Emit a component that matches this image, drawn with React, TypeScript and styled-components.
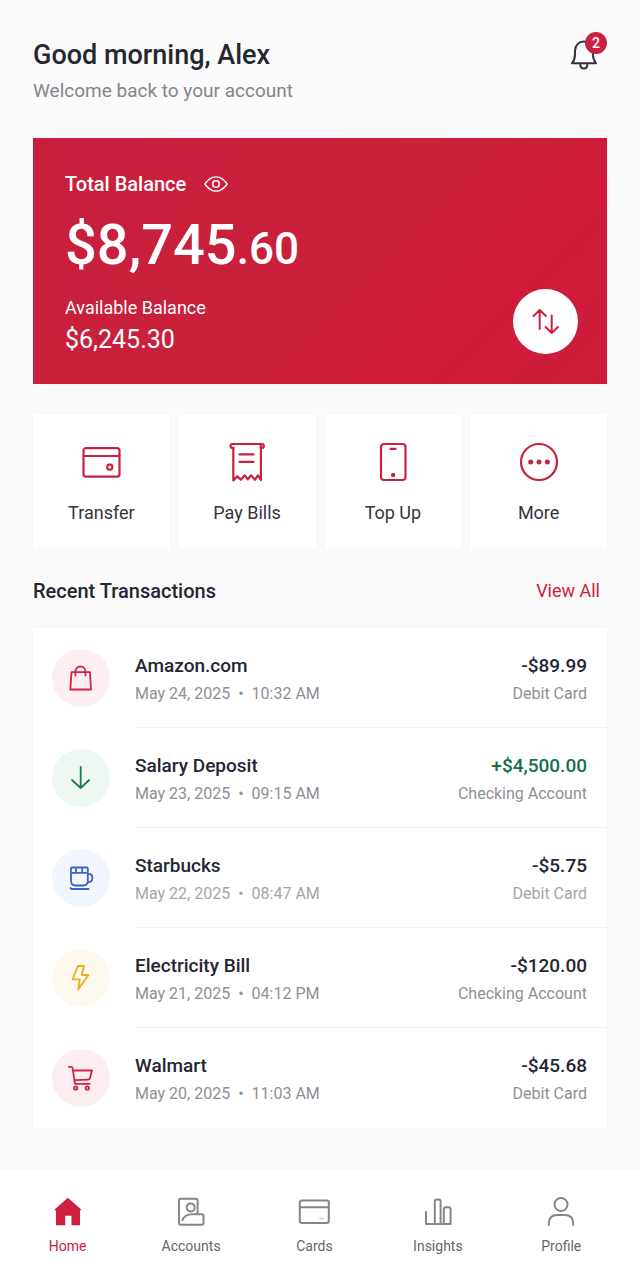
import React from 'react';
import styled, { createGlobalStyle } from 'styled-components';

const GlobalStyle = createGlobalStyle`
  * {
    box-sizing: border-box;
  }

  body {
    margin: 0;
    background: #fafafa;
    color: #252633;
    font-family: Roboto, 'Liberation Sans', sans-serif;
  }

  h1, h2, p, ul {
    margin: 0;
    padding: 0;
  }

  button {
    border: none;
    padding: 0;
    font: inherit;
    color: inherit;
    cursor: pointer;
  }

  a {
    text-decoration: none;
  }
`;

const Icon = styled.svg<{ $stroke?: number }>`
  display: block;
  flex: none;
  fill: none;
  stroke: currentColor;
  stroke-width: ${(p) => p.$stroke ?? 2};
  stroke-linecap: round;
  stroke-linejoin: round;
`;

const Page = styled.div`
  display: flex;
  flex-direction: column;
  min-height: 100vh;
`;

const Main = styled.main`
  flex: 1;
  padding: 32px 33px 42px;
`;

const Header = styled.header`
  display: flex;
  justify-content: space-between;
  align-items: flex-start;
`;

const Greeting = styled.div`
  padding-top: 7px;
`;

const Title = styled.h1`
  font-size: 27px;
  line-height: 32px;
  font-weight: 500;
`;

const Subtitle = styled.p`
  margin-top: 8px;
  font-size: 19px;
  line-height: 24px;
  color: #85858b;
`;

const BellButton = styled.button`
  position: relative;
  width: 37px;
  height: 38px;
  padding-top: 6px;
  background: none;
  color: #30313b;
`;

const Badge = styled.span`
  position: absolute;
  top: 0;
  right: 0;
  width: 22px;
  height: 22px;
  border-radius: 50%;
  background: #c9213f;
  color: #fff;
  font-size: 14px;
  line-height: 22px;
  font-weight: 500;
  text-align: center;
`;

const BalanceCard = styled.section`
  display: flex;
  justify-content: space-between;
  align-items: flex-end;
  margin-top: 35px;
  padding: 34px 29px 30px 32px;
  background: linear-gradient(135deg, #c8203c 0%, #c9203c 50%, #d01b3a 75%, #cb1d3a 100%);
  color: #fff;
`;

const BalanceLabel = styled.div`
  display: flex;
  align-items: center;
  gap: 18px;
  font-size: 20px;
  line-height: 24px;
  font-weight: 500;
`;

const EyeButton = styled.button`
  background: none;
`;

const Balance = styled.p`
  margin-top: 19px;
  font-size: 56px;
  line-height: 60px;
  font-weight: 500;
`;

const Cents = styled.span`
  font-size: 44px;
  line-height: 1;
`;

const AvailableLabel = styled.p`
  margin-top: 21px;
  font-size: 18px;
  line-height: 24px;
`;

const Available = styled.p`
  margin-top: 6px;
  font-size: 25px;
  line-height: 28px;
`;

const SwapButton = styled.button`
  display: flex;
  align-items: center;
  justify-content: center;
  width: 65px;
  height: 65px;
  border-radius: 50%;
  background: #fff;
  color: #c9213f;
`;

const Actions = styled.div`
  display: grid;
  grid-template-columns: repeat(4, 1fr);
  gap: 9px;
  margin-top: 30px;
`;

const ActionButton = styled.button`
  display: flex;
  flex-direction: column;
  align-items: center;
  gap: 19px;
  padding: 28px 0 24px;
  background: #fff;
  box-shadow: 0 0 3px rgba(0, 0, 0, 0.03);
  font-size: 18px;
  line-height: 24px;
  color: #34343e;

  ${Icon} {
    color: #c9213f;
  }
`;

const SectionHeader = styled.div`
  display: flex;
  justify-content: space-between;
  align-items: center;
  margin-top: 28px;
  padding-right: 7px;
`;

const SectionTitle = styled.h2`
  font-size: 20px;
  line-height: 28px;
  font-weight: 500;
`;

const ViewAll = styled.a`
  font-size: 18px;
  line-height: 24px;
  color: #cf213f;
`;

const List = styled.ul`
  margin-top: 23px;
  background: #fff;
  box-shadow: 0 0 3px rgba(0, 0, 0, 0.03);
  list-style: none;
`;

const RowBody = styled.div`
  display: flex;
  flex: 1;
  justify-content: space-between;
  align-items: center;
  padding: 3px 20px 0 0;
  border-bottom: 1px solid #f4f4f5;
`;

const Row = styled.li`
  display: flex;
  gap: 25px;
  height: 100px;
  padding-left: 19px;

  &:last-child ${RowBody} {
    border-bottom-color: transparent;
  }
`;

const RowIcon = styled.div<{ $bg: string; $color: string }>`
  display: flex;
  align-items: center;
  justify-content: center;
  align-self: center;
  width: 58px;
  height: 58px;
  border-radius: 50%;
  background: ${(p) => p.$bg};
  color: ${(p) => p.$color};
`;

const Column = styled.div<{ $end?: boolean }>`
  display: flex;
  flex-direction: column;
  gap: 6px;
  text-align: ${(p) => (p.$end ? 'right' : 'left')};
`;

const Name = styled.span`
  font-size: 19px;
  line-height: 24px;
  font-weight: 500;
`;

const Amount = styled(Name)<{ $positive?: boolean }>`
  color: ${(p) => (p.$positive ? '#14704a' : '#252633')};
`;

const Meta = styled.span<{ $light?: boolean }>`
  font-size: 16px;
  line-height: 20px;
  color: ${(p) => (p.$light ? '#a5a5a9' : '#8f8f94')};
`;

const Dot = styled.span`
  margin: 0 8px;
`;

const Nav = styled.nav`
  display: grid;
  grid-template-columns: repeat(5, 1fr);
  padding: 26px 17px 24px 6px;
  background: #fff;
`;

const NavLink = styled.a<{ $active?: boolean }>`
  display: flex;
  flex-direction: column;
  align-items: center;
  gap: 8px;
  font-size: 14px;
  line-height: 20px;
  color: ${(p) => (p.$active ? '#cf213f' : '#66666b')};

  ${Icon} {
    color: ${(p) => (p.$active ? '#cf213f' : '#85858a')};
  }
`;

const BellIcon = () => (
  <Icon width="28" height="32" viewBox="0 0 28 32">
    <path d="M2 25.3H26C23.8 22.5 22.9 20 22.9 16.5V13C22.9 7.5 18.8 3.5 13.8 3.5S5 7.5 5 13v3.5C5 20 4.2 22.5 2 25.3z" />
    <path d="M10.3 26.5c0 2.6 1.3 4 3.5 4s3.5-1.4 3.5-4" />
  </Icon>
);

const EyeIcon = () => (
  <Icon width="24" height="16" viewBox="0 0 24 16" $stroke={1.4}>
    <path d="M.8 8C4 3.5 7.500 .9 12 .9S20 3.500 23.200 8c-3.200 4.500-6.700 7.100-11.200 7.100S4 12.500 .8 8z" />
    <rect x="8.800" y="4.800" width="6.400" height="6.400" rx="2.600" />
  </Icon>
);

const SwapIcon = () => (
  <Icon width="32" height="32" viewBox="0 0 32 32">
    <path d="M9.700 23V4M3.500 10l6.200-6 6.200 6M21.700 9.500V27M15.600 21l6.100 6 6.200-6" />
  </Icon>
);

const actions = [
  {
    label: 'Transfer',
    icon: (
      <>
        <rect x="2.500" y="6.200" width="36" height="28.500" rx="2.500" />
        <path d="M3 14h35.500" />
        <rect x="26.300" y="22.600" width="5" height="5" rx="2" />
      </>
    ),
  },
  {
    label: 'Pay Bills',
    icon: (
      <>
        <path d="M6.300 5.500V38.500l4-4.300 3.600 3.600 3.900-4.500 3 4 3.200-4 3.800 4.500 3.200-4.500 2.900 4.700V5.500" />
        <path d="M6.300 6H5.500a1.900 1.900 0 0 1 0-4H34.800a1.900 1.900 0 0 1 0 4h-1V3.500" />
        <path d="M12.500 12.300h14M12.500 19.800h14" />
      </>
    ),
  },
  {
    label: 'Top Up',
    icon: (
      <>
        <rect x="8" y="2" width="24.500" height="36" rx="3" />
        <path d="M17.500 6.800h5" />
        <rect x="19.200" y="32.200" width="1.800" height="1.600" />
      </>
    ),
  },
  {
    label: 'More',
    icon: (
      <>
        <circle cx="20" cy="20" r="18" />
        <g fill="currentColor" stroke="none">
          <circle cx="11.700" cy="20" r="2.500" />
          <circle cx="20" cy="20" r="2.500" />
          <circle cx="28.400" cy="20" r="2.500" />
        </g>
      </>
    ),
  },
];

const transactions = [
  {
    name: 'Amazon.com',
    date: 'May 24, 2025',
    time: '10:32 AM',
    amount: '-$89.99',
    account: 'Debit Card',
    bg: '#fdeef1',
    color: '#cf2342',
    icon: <path d="M6.500 10.200H25L26 27.500H5.300zM10.400 13.500V9.500a5 5 0 0 1 10 0v4" />,
  },
  {
    name: 'Salary Deposit',
    date: 'May 23, 2025',
    time: '09:15 AM',
    amount: '+$4,500.00',
    account: 'Checking Account',
    positive: true,
    bg: '#eef7f1',
    color: '#1f7a50',
    icon: <path d="M15.700 5v21M7 18l8.700 8 8.500-8" />,
  },
  {
    name: 'Starbucks',
    date: 'May 22, 2025',
    time: '08:47 AM',
    amount: '-$5.75',
    account: 'Debit Card',
    light: true,
    bg: '#f1f5fd',
    color: '#3f63c4',
    icon: (
      <>
        <path d="M6 6.500q0-1 1-1h14.800q1 0 1 1V19q0 4.500-4.500 4.500h-7.800Q6 23.500 6 19zM6 10.800h16.800M11 5.500v5M17.200 5.500v5" />
        <path d="M22.800 12.200h1.700q2.800 0 2.800 2.800v1.500q0 3.500-4.500 4M5.500 26q0 1 1.500 1h16.500" />
      </>
    ),
  },
  {
    name: 'Electricity Bill',
    date: 'May 21, 2025',
    time: '04:12 PM',
    amount: '-$120.00',
    account: 'Checking Account',
    bg: '#fef9ef',
    color: '#e9ae1c',
    icon: <path d="M13 4h6l-2.200 9h6.700L13.200 27.300l1.600-10H7.500z" />,
  },
  {
    name: 'Walmart',
    date: 'May 20, 2025',
    time: '11:03 AM',
    amount: '-$45.68',
    account: 'Debit Card',
    bg: '#fceef0',
    color: '#cf2342',
    icon: (
      <>
        <path d="M3.800 4.800h2.700q.8 0 1 .9L10 21.800h14.500M8 8.500h19L25 16q-.4 1.500-2 1.600l-13.500.6" />
        <circle cx="10.700" cy="26" r="1.700" />
        <circle cx="22.300" cy="26" r="1.700" />
      </>
    ),
  },
];

const navItems = [
  {
    label: 'Home',
    active: true,
    icon: (
      <path
        d="M15.900 1.700L29.200 13.500 28 15v14.300h-8.500v-9.500h-6.300v9.500H4V15L2.600 13.500z"
        fill="currentColor"
        stroke="none"
      />
    ),
  },
  {
    label: 'Accounts',
    icon: (
      <>
        <path d="M22.600 18.300V4.500q0-1.700-1.700-1.700H5.700Q4 2.800 4 4.500v22.600q0 1.700 1.700 1.700h21.100q1.700 0 1.700-1.700V20q0-1.700-1.700-1.700H18q-8.500-.2-10.600 6" />
        <circle cx="15.700" cy="11.400" r="4" />
      </>
    ),
  },
  {
    label: 'Cards',
    icon: (
      <>
        <rect x="1.800" y="4.600" width="29" height="22.500" rx="2" />
        <path d="M2 11.300h28.500" />
        <path d="M22 22.500h3" opacity="0.300" />
      </>
    ),
  },
  {
    label: 'Insights',
    icon: (
      <path d="M4 15.800V28h24.600V13.300q0-2-2-2h-2.800q-2 0-2 2V28M18.600 28V5.500q0-2-2-2h-1.800q-2 0-2 2V28" />
    ),
  },
  {
    label: 'Profile',
    icon: (
      <>
        <circle cx="16" cy="8.500" r="6.500" />
        <path d="M3.800 29v-1.500q0-8.500 8.500-8.500h7.400q8.500 0 8.500 8.500V29" />
      </>
    ),
  },
];

const App: React.FC = () => {
  return (
    <Page>
      <GlobalStyle />
      <Main>
        <Header>
          <Greeting>
            <Title>Good morning, Alex</Title>
            <Subtitle>Welcome back to your account</Subtitle>
          </Greeting>
          <BellButton aria-label="Notifications">
            <BellIcon />
            <Badge>2</Badge>
          </BellButton>
        </Header>

        <BalanceCard>
          <div>
            <BalanceLabel>
              Total Balance
              <EyeButton aria-label="Hide balance">
                <EyeIcon />
              </EyeButton>
            </BalanceLabel>
            <Balance>
              $8,745<Cents>.60</Cents>
            </Balance>
            <AvailableLabel>Available Balance</AvailableLabel>
            <Available>$6,245.30</Available>
          </div>
          <SwapButton aria-label="Move money">
            <SwapIcon />
          </SwapButton>
        </BalanceCard>

        <Actions>
          {actions.map((a) => (
            <ActionButton key={a.label}>
              <Icon width="40" height="40" viewBox="0 0 40 40" $stroke={2.2}>
                {a.icon}
              </Icon>
              {a.label}
            </ActionButton>
          ))}
        </Actions>

        <SectionHeader>
          <SectionTitle>Recent Transactions</SectionTitle>
          <ViewAll href="#transactions">View All</ViewAll>
        </SectionHeader>

        <List id="transactions">
          {transactions.map((t) => (
            <Row key={t.name}>
              <RowIcon $bg={t.bg} $color={t.color}>
                <Icon width="32" height="32" viewBox="0 0 32 32" $stroke={1.8}>
                  {t.icon}
                </Icon>
              </RowIcon>
              <RowBody>
                <Column>
                  <Name>{t.name}</Name>
                  <Meta $light={t.light}>
                    {t.date}
                    <Dot>•</Dot>
                    {t.time}
                  </Meta>
                </Column>
                <Column $end>
                  <Amount $positive={t.positive}>{t.amount}</Amount>
                  <Meta $light={t.light}>{t.account}</Meta>
                </Column>
              </RowBody>
            </Row>
          ))}
        </List>
      </Main>

      <Nav>
        {navItems.map((n) => (
          <NavLink key={n.label} href={`#${n.label.toLowerCase()}`} $active={n.active}>
            <Icon width="32" height="32" viewBox="0 0 32 32">
              {n.icon}
            </Icon>
            {n.label}
          </NavLink>
        ))}
      </Nav>
    </Page>
  );
};

export default App;
